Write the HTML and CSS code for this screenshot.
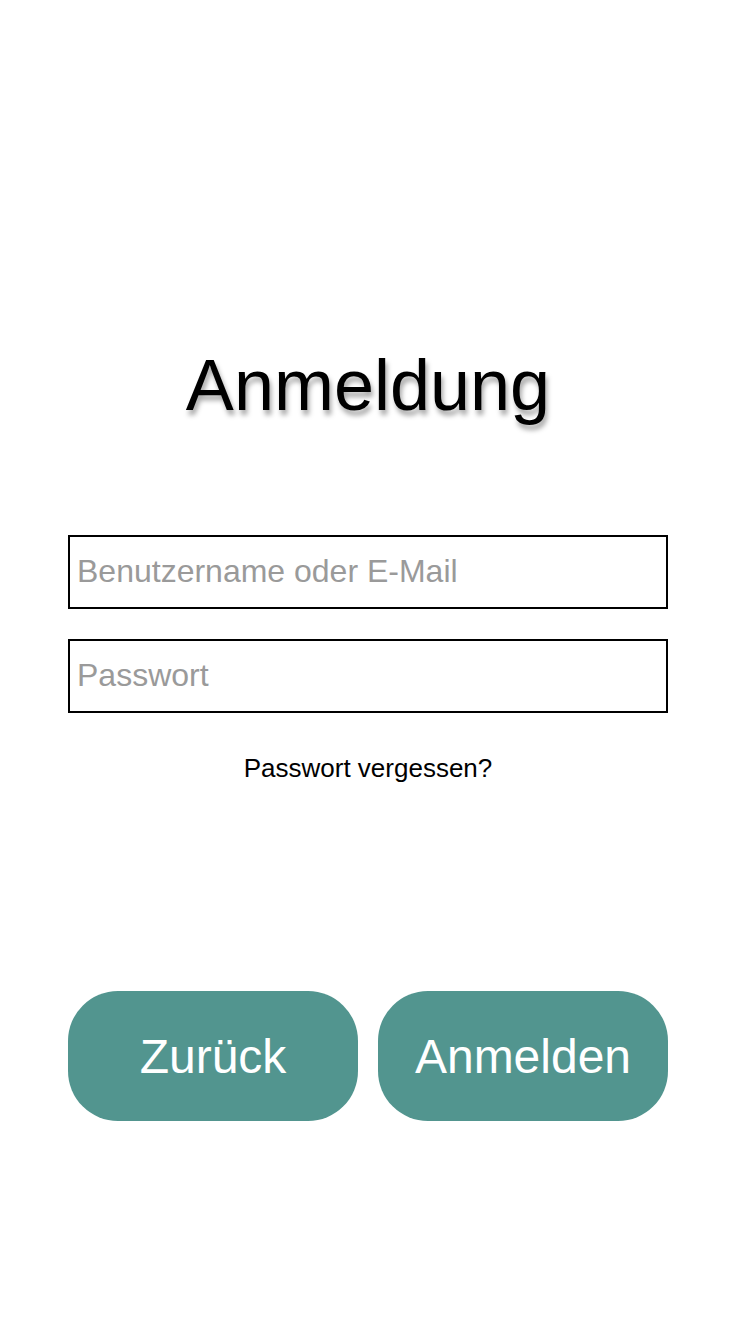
FILE: index.html
```html
<!DOCTYPE html>
<html lang="de">
<head>
<meta charset="utf-8">
<title>Anmeldung</title>
<link rel="stylesheet" href="styles.css">
</head>
<body>
<main class="page">
  <h1 class="title">Anmeldung</h1>
  <form class="form">
    <input class="field" type="text" placeholder="Benutzername oder E-Mail">
    <input class="field" type="password" placeholder="Passwort">
  </form>
  <p class="forgot">Passwort vergessen?</p>
  <div class="actions">
    <button class="btn" type="button">Zurück</button>
    <button class="btn" type="button">Anmelden</button>
  </div>
</main>
</body>
</html>
```
FILE: styles.css
```css
html, body {
  margin: 0;
  padding: 0;
  background: #ffffff;
}

body {
  font-family: "Liberation Sans", Arial, sans-serif;
  color: #000;
}

.page {
  width: 600px;
  margin-left: 68px;
  padding-top: 344px;
  display: flex;
  flex-direction: column;
}

.title {
  margin: 0;
  font-size: 72px;
  font-weight: 400;
  line-height: 82px;
  text-align: center;
  text-shadow: 2px 5px 5px rgba(0, 0, 0, 0.35);
}

.form {
  margin-top: 109px;
  display: flex;
  flex-direction: column;
  gap: 30px;
}

.field {
  box-sizing: border-box;
  width: 600px;
  height: 74px;
  margin: 0;
  border: 2px solid #000;
  border-radius: 0;
  padding: 0 7px 2px 7px;
  font-family: "Liberation Sans", Arial, sans-serif;
  font-size: 32px;
  color: #000;
  background: #fff;
  outline: none;
}

.field::placeholder {
  color: #9a9a9a;
  opacity: 1;
}

.forgot {
  margin: 40px 0 0 0;
  font-size: 26px;
  line-height: 30px;
  text-align: center;
}

.actions {
  margin-top: 208px;
  display: flex;
  gap: 20px;
}

.btn {
  flex: 1;
  height: 130px;
  margin: 0;
  border: none;
  border-radius: 50px;
  background: #52958f;
  color: #fff;
  font-family: "Liberation Sans", Arial, sans-serif;
  font-size: 48px;
  padding: 0;
  cursor: pointer;
}
```
